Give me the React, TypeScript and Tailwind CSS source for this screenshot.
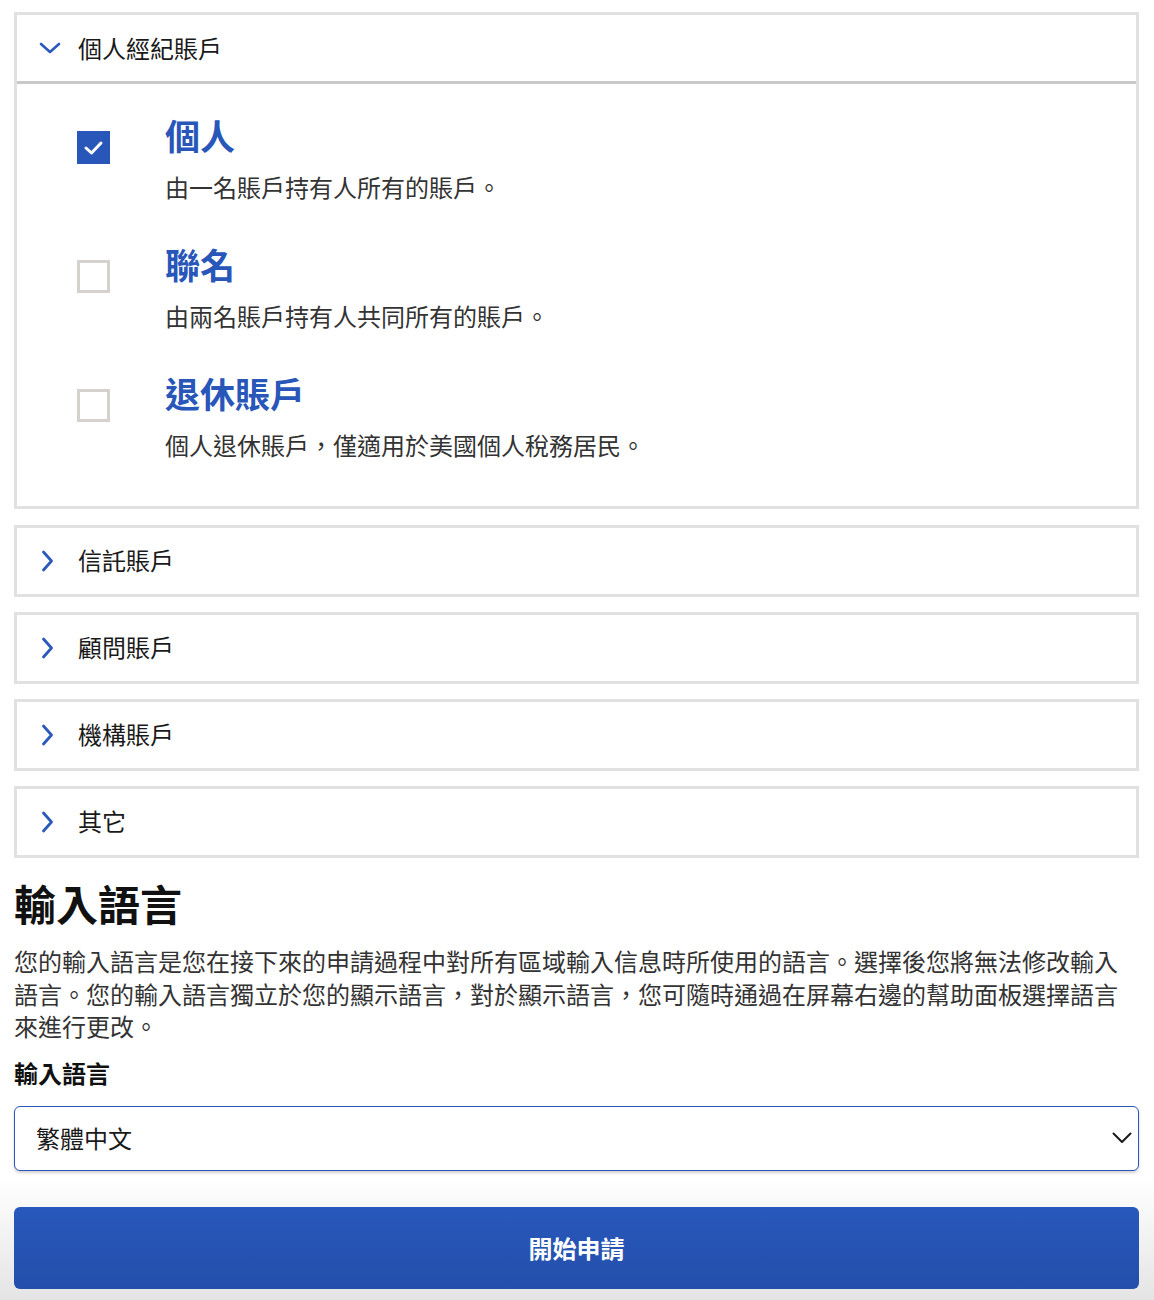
import React from "react";

const ChevronDown = () => (
  <svg width="22" height="12" viewBox="0 0 22 12" fill="none">
    <path d="M2 2 L11 10 L20 2" stroke="#2a58bb" strokeWidth="2.6" strokeLinecap="round" strokeLinejoin="round" />
  </svg>
);

const ChevronRight = () => (
  <svg width="13" height="22" viewBox="0 0 13 22" fill="none">
    <path d="M2.5 2 L10.5 11 L2.5 20" stroke="#2a58bb" strokeWidth="2.8" strokeLinecap="round" strokeLinejoin="round" />
  </svg>
);

const Option = ({ checked, title, desc }: { checked: boolean; title: string; desc: string }) => (
  <div className="flex">
    <div className="w-[88px] shrink-0 pt-[18px]">
      {checked ? (
        <div className="w-[33px] h-[33px] bg-[#2856b9] flex items-center justify-center">
          <svg width="21" height="16" viewBox="0 0 21 16" fill="none">
            <path d="M3 8 L8.5 13 L18 3" stroke="white" strokeWidth="3" strokeLinecap="round" strokeLinejoin="round" />
          </svg>
        </div>
      ) : (
        <div className="w-[33px] h-[33px] border-[3px] border-[#d5d2cd] bg-white" />
      )}
    </div>
    <div className="flex flex-col">
      <div className="text-[35px] leading-[44px] font-bold text-[#2856b9]">{title}</div>
      <div className="mt-[14px] text-[24px] leading-[32px] text-[#333333]">{desc}</div>
    </div>
  </div>
);

const Collapsed = ({ label }: { label: string }) => (
  <div className="border-[3px] border-[#e1e1e1] bg-white h-[72px] flex items-center pb-[3px]">
    <div className="w-[61px] pl-[24px] pt-[3px] flex items-center">
      <ChevronRight />
    </div>
    <span className="text-[24px] text-[#1a1a1a]">{label}</span>
  </div>
);

export default function App() {
  return (
    <div
      className="w-[1154px] min-h-[1300px] bg-white flex flex-col"
      style={{ fontFamily: '"Noto Sans CJK TC", "Noto Sans", sans-serif' }}
    >
      <div className="pt-[12px] pl-[14px] pr-[15px] flex flex-col">
        {/* Expanded panel */}
        <div className="border-[3px] border-[#e1e1e1] bg-white">
          <div className="h-[69px] flex items-center border-b-[3px] border-[#c9c9c9] pb-[1px]">
            <div className="w-[61px] pl-[22px] pt-[1px] flex items-center">
              <ChevronDown />
            </div>
            <span className="text-[24px] text-[#1a1a1a]">個人經紀賬戶</span>
          </div>
          <div className="pl-[60px] pt-[29px] pb-[45px] flex flex-col gap-[39px]">
            <Option checked title="個人" desc="由一名賬戶持有人所有的賬戶。" />
            <Option checked={false} title="聯名" desc="由兩名賬戶持有人共同所有的賬戶。" />
            <Option checked={false} title="退休賬戶" desc="個人退休賬戶，僅適用於美國個人稅務居民。" />
          </div>
        </div>

        <div className="mt-[16px] flex flex-col gap-[15px]">
          <Collapsed label="信託賬戶" />
          <Collapsed label="顧問賬戶" />
          <Collapsed label="機構賬戶" />
          <Collapsed label="其它" />
        </div>

        <h1 className="mt-[20px] text-[42px] leading-[50px] font-bold text-[#111111]">輸入語言</h1>
        <p className="mt-[17px] text-[24px] leading-[32.5px] text-[#333333]">
          您的輸入語言是您在接下來的申請過程中對所有區域輸入信息時所使用的語言。選擇後您將無法修改輸入語言。您的輸入語言獨立於您的顯示語言，對於顯示語言，您可隨時通過在屏幕右邊的幫助面板選擇語言來進行更改。
        </p>
        <div className="mt-[14px] text-[24px] leading-[32px] font-bold text-[#111111]">輸入語言</div>
        <div className="mt-[17px] h-[65px] rounded-[6px] border border-[#2856b9] bg-white shadow-[0_2px_3px_rgba(0,0,0,0.18)] flex items-center justify-between pl-[21px] pr-[6px]">
          <span className="text-[24px] text-[#1a1a1a]">繁體中文</span>
          <svg width="20" height="12" viewBox="0 0 20 12" fill="none">
            <path d="M1.5 1.5 L10 10 L18.5 1.5" stroke="#1a1a1a" strokeWidth="2" strokeLinecap="round" strokeLinejoin="round" />
          </svg>
        </div>
      </div>

      <div className="mt-[8px] flex-1 bg-gradient-to-b from-white to-[#e4e4e4] pt-[28px] pb-[10px] pl-[14px] pr-[15px]">
        <button className="w-full h-[82px] rounded-[6px] bg-gradient-to-b from-[#2858bc] to-[#244fab] text-white text-[24px] font-bold flex items-center justify-center">
          開始申請
        </button>
      </div>
    </div>
  );
}
